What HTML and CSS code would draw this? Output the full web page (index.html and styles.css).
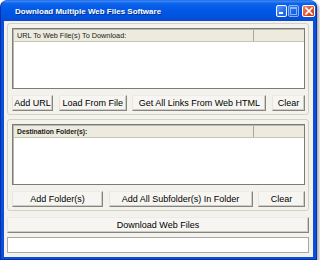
FILE: index.html
```html
<!DOCTYPE html>
<html lang="en">
<head>
    <meta charset="UTF-8">
    <title>Download Multiple Web Files Software</title>
    <link rel="stylesheet" href="styles.css">
</head>
<body class="page">
<div class="window">
    <div class="titlebar">
        <span class="title">Download Multiple Web Files Software</span>
        <div class="controls">
            <span class="ctl ctl-min"><span class="min-bar"></span></span>
            <span class="ctl ctl-max"><span class="max-box"></span></span>
            <span class="ctl ctl-close">
                <svg width="8" height="8" viewBox="0 0 8 8">
                    <path d="M1 1 L7 7 M7 1 L1 7" stroke="#fff" stroke-width="1.6" stroke-linecap="square"/>
                </svg>
            </span>
        </div>
    </div>
    <div class="client">
        <div class="group">
            <div class="list">
                <div class="list-head">
                    <span class="col col-main">URL To Web File(s) To Download:</span>
                    <span class="col"></span>
                </div>
            </div>
            <div class="btn-row row-urls">
                <button class="btn">Add URL</button>
                <button class="btn">Load From File</button>
                <button class="btn">Get All Links From Web HTML</button>
                <button class="btn">Clear</button>
            </div>
        </div>
        <div class="group">
            <div class="list">
                <div class="list-head list-head-bold">
                    <span class="col col-main">Destination Folder(s):</span>
                    <span class="col"></span>
                </div>
            </div>
            <div class="btn-row row-folders">
                <button class="btn">Add Folder(s)</button>
                <button class="btn">Add All Subfolder(s) In Folder</button>
                <button class="btn">Clear</button>
            </div>
        </div>
        <button class="btn btn-wide">Download Web Files</button>
        <div class="status"></div>
    </div>
</div>
</body>
</html>
```

FILE: styles.css
```css
html, body {
    margin: 0;
    padding: 0;
}

.page {
    background: #ffffff;
    font-family: "Liberation Sans", Arial, sans-serif;
}

.window {
    width: 317px;
    height: 260px;
    box-sizing: border-box;
    display: flex;
    flex-direction: column;
    background: #0a4fdc;
    border: 1px solid #0b2fa8;
    border-top-color: #2a74f0;
    border-radius: 7px 7px 0 0;
    box-shadow: 2px 2px 3px rgba(0, 0, 0, 0.35);
}

.titlebar {
    height: 20px;
    flex: none;
    display: flex;
    align-items: center;
    padding: 0 1px 0 14px;
    border-radius: 6px 6px 0 0;
    background: linear-gradient(#3d8cf7 0%, #0d63ea 12%, #0058e6 45%, #0052df 80%, #0b49cf 100%);
}

.title {
    flex: 1;
    color: #ffffff;
    font-size: 8px;
    font-weight: bold;
    text-shadow: 1px 1px 0 #0a2f8c;
    white-space: nowrap;
}

.controls {
    display: flex;
    gap: 1px;
}

.ctl {
    width: 11px;
    height: 12px;
    box-sizing: border-box;
    border: 1px solid #ffffff;
    border-radius: 2px;
    display: flex;
    align-items: center;
    justify-content: center;
    background: linear-gradient(135deg, #5f9bfb, #2a6df0 60%, #1e5ee0);
    position: relative;
}

.ctl-min .min-bar {
    position: absolute;
    left: 2px;
    bottom: 2px;
    width: 4px;
    height: 2px;
    background: #ffffff;
}

.ctl-max {
    opacity: 0.55;
}

.ctl-max .max-box {
    width: 5px;
    height: 5px;
    border: 1px solid #ffffff;
    border-top-width: 2px;
}

.ctl-close {
    margin-left: 2px;
    width: 13px;
    background: linear-gradient(135deg, #f08a6a, #e2522c 55%, #c63a16);
}

.client {
    flex: 1;
    margin: 0 3px 3px 3px;
    background: #f3f2ec;
    padding: 2px 4px 4px 3px;
    display: flex;
    flex-direction: column;
}

.group {
    border: 1px solid #d2d1c4;
    border-radius: 3px;
    padding: 4px 3px 3px 4px;
    margin-bottom: 4px;
}

.list {
    height: 61px;
    box-sizing: border-box;
    background: #ffffff;
    border: 1px solid #7c7c76;
    box-shadow: inset 1px 1px 0 #b8b8b0;
}

.list-head {
    height: 11px;
    display: flex;
    background: #ecebdd;
    border-bottom: 1px solid #c7c5b2;
    font-size: 7.3px;
    color: #1a1a1a;
    line-height: 11px;
    margin: 1px 0 0 1px;
}

.list-head-bold {
    font-size: 6.8px;
    font-weight: bold;
}

.col {
    flex: 1;
    padding-left: 3px;
    white-space: nowrap;
}

.col-main {
    flex: none;
    width: 236px;
    border-right: 1px solid #a9a795;
}

.btn-row {
    display: grid;
    justify-content: space-between;
    margin-top: 6px;
}

.row-urls {
    grid-template-columns: 41px 68px 134px 33px;
}

.row-folders {
    grid-template-columns: 91px 144px 47px;
}

.btn {
    height: 16px;
    padding: 0;
    font-family: "Liberation Sans", Arial, sans-serif;
    font-size: 9px;
    color: #000000;
    background: #f6f5f1;
    border: 1px solid;
    border-color: #ecebe5 #85847e #85847e #e6e5de;
    box-shadow: inset -1px -1px 0 #cfcec6;
    white-space: nowrap;
}

.btn-wide {
    margin-top: 2px;
}

.status {
    height: 16px;
    margin-top: 4px;
    box-sizing: border-box;
    background: #ffffff;
    border: 1px solid #a9a9a2;
}
```
